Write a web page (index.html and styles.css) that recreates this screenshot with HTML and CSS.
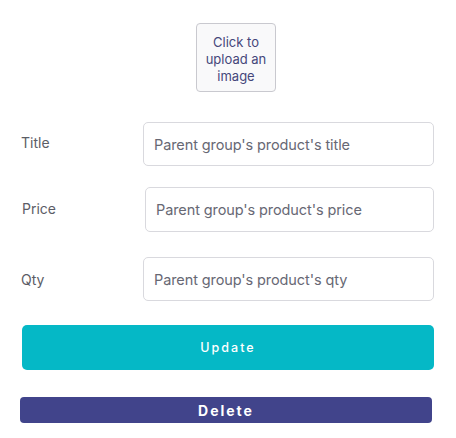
FILE: index.html
```html
<!DOCTYPE html>
<html>
<head>
<meta charset="utf-8">
<link rel="stylesheet" href="styles.css">
</head>
<body>
<div class="page">
  <div class="upload-wrap">
    <div class="upload">Click to upload an image</div>
  </div>
  <div class="row row-title">
    <label class="label">Title</label>
    <div class="input">Parent group's product's title</div>
  </div>
  <div class="row row-price">
    <label class="label">Price</label>
    <div class="input">Parent group's product's price</div>
  </div>
  <div class="row row-qty">
    <label class="label">Qty</label>
    <div class="input">Parent group's product's qty</div>
  </div>
  <button class="btn btn-update">Update</button>
  <button class="btn btn-delete">Delete</button>
</div>
</body>
</html>
```
FILE: styles.css
```css
* { box-sizing: border-box; }
html, body { margin: 0; padding: 0; background: #fff; }
body { font-family: Inter, "Noto Sans", sans-serif; }
.page { width: 456px; padding: 23px 22px 0 20px; display: flex; flex-direction: column; }
.upload-wrap { display: flex; justify-content: center; padding-left: 18px; }
.upload {
  width: 80px; height: 69px;
  border: 1px solid #c9c9cf; border-radius: 4px;
  background: #f9f9fa;
  display: flex; align-items: center; justify-content: center;
  text-align: center; font-size: 13px; line-height: 17px; color: #45477a;
  padding: 4px 5px 0;
}
.row { display: flex; align-items: center; }
.label { width: 123px; font-size: 14px; color: #5c5d66; padding-left: 1px; }
.input {
  flex: 1; height: 44px; border: 1px solid #d9d9de; border-radius: 5px;
  padding: 0 0 0 10px; display: flex; align-items: center;
  font-size: 14.5px; letter-spacing: -0.1px; color: #676874;
}
.row-title { margin-top: 30px; }
.row-title .label { padding-bottom: 3px; }
.row-price { margin-top: 21px; }
.row-price .label { width: 125px; padding-left: 2px; padding-bottom: 3px; }
.row-price .input { height: 45px; }
.row-qty { margin-top: 25px; }
.row-qty .label { padding-bottom: 0; }
.btn {
  border: none; font-family: Inter, "Noto Sans", sans-serif; color: #fff; cursor: pointer;
}
.btn-update {
  margin-top: 24px; margin-left: 2px; height: 45px; border-radius: 5px;
  background: #05b8c6; font-size: 12.5px; letter-spacing: 2px; font-weight: 500;
}
.btn-delete {
  margin-top: 27px; margin-right: 2px; height: 26px; border-radius: 4px;
  background: #41448b; font-size: 14px; font-weight: 700; letter-spacing: 2px;
}
```
